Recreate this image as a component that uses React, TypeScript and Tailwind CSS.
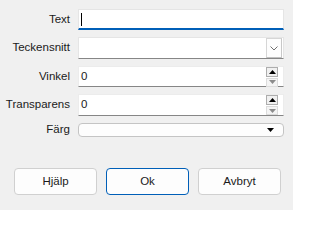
const labelCls =
  "w-[70px] shrink-0 text-right text-[11.5px] leading-none text-[#1a1a1a]";

const SpinButtons = () => (
  <div className="flex flex-col gap-[1px] mr-[5px]">
    <div className="w-[12px] h-[10px] border border-[#adadad] bg-[#f0f0f0] flex items-center justify-center">
      <svg width="7" height="4" viewBox="0 0 7 4">
        <path d="M0 4 L3.5 0 L7 4 Z" fill="#000" />
      </svg>
    </div>
    <div className="w-[12px] h-[9px] border border-[#dcdcdc] bg-[#f4f4f4] flex items-center justify-center">
      <svg width="7" height="4" viewBox="0 0 7 4">
        <path d="M0 0 L3.5 4 L7 0 Z" fill="#8c8c8c" />
      </svg>
    </div>
  </div>
);

const App = () => {
  return (
    <div
      className="w-[293px] h-[210px] bg-[#f0f0f0] flex flex-col text-[#1a1a1a]"
      style={{ fontFamily: '"Liberation Sans", Arial, sans-serif' }}
    >
      <div className="flex flex-col pt-[9px] pr-[9px]">
        <div className="flex items-center h-[21px]">
          <span className={labelCls}>Text</span>
          <div className="ml-[8px] flex-1 h-full bg-white border border-[#e5e5e5] border-b-2 border-b-[#005fb8] flex items-center pl-[2px]">
            <div className="w-px h-[13px] bg-black" />
          </div>
        </div>

        <div className="flex items-center h-[22px] mt-[7px]">
          <span className={labelCls}>Teckensnitt</span>
          <div className="ml-[8px] flex-1 h-full bg-white border border-[#e5e5e5] border-b-[#868686] flex items-center justify-end pr-px">
            <div className="w-[16px] h-[20px] border border-[#d6d6d6] border-r-[#c8c8c8] border-b-[#c0c0c0] bg-[#fdfdfd] flex items-center justify-center">
              <svg width="8" height="5" viewBox="0 0 8 5">
                <path d="M0.5 0.5 L4 4 L7.5 0.5" fill="none" stroke="#707070" strokeWidth="1" />
              </svg>
            </div>
          </div>
        </div>

        <div className="flex items-center h-[21px] mt-[7px]">
          <span className={labelCls}>Vinkel</span>
          <div className="ml-[8px] flex-1 h-full bg-white border border-[#ececec] border-b-[#868686] flex items-center justify-between pl-[2px]">
            <span className="text-[11.5px] leading-none">0</span>
            <SpinButtons />
          </div>
        </div>

        <div className="flex items-center h-[22px] mt-[7px]">
          <span className={labelCls}>Transparens</span>
          <div className="ml-[8px] flex-1 h-full bg-white border border-[#ececec] border-b-[#868686] flex items-center justify-between pl-[2px]">
            <span className="text-[11.5px] leading-none">0</span>
            <SpinButtons />
          </div>
        </div>

        <div className="flex items-center h-[14px] mt-[7px]">
          <span className={labelCls}>Färg</span>
          <div className="ml-[8px] flex-1 h-full bg-[#fdfdfd] border border-[#c4c4c4] rounded-[4px] flex items-center justify-end pr-[9px]">
            <svg width="7" height="4" viewBox="0 0 7 4">
              <path d="M0 0 L3.5 4 L7 0 Z" fill="#000" />
            </svg>
          </div>
        </div>
      </div>

      <div className="flex gap-[9px] pl-[14px] mt-[31px]">
        <button className="w-[83px] h-[27px] rounded-[4px] border border-[#d0d0d0] bg-[#fdfdfd] text-[11.5px]">
          Hjälp
        </button>
        <button className="w-[83px] h-[27px] rounded-[4px] border border-[#005fb8] bg-[#fdfdfd] text-[11.5px]">
          Ok
        </button>
        <button className="w-[83px] h-[27px] rounded-[4px] border border-[#d0d0d0] bg-[#fdfdfd] text-[11.5px]">
          Avbryt
        </button>
      </div>
    </div>
  );
};

export default App;
